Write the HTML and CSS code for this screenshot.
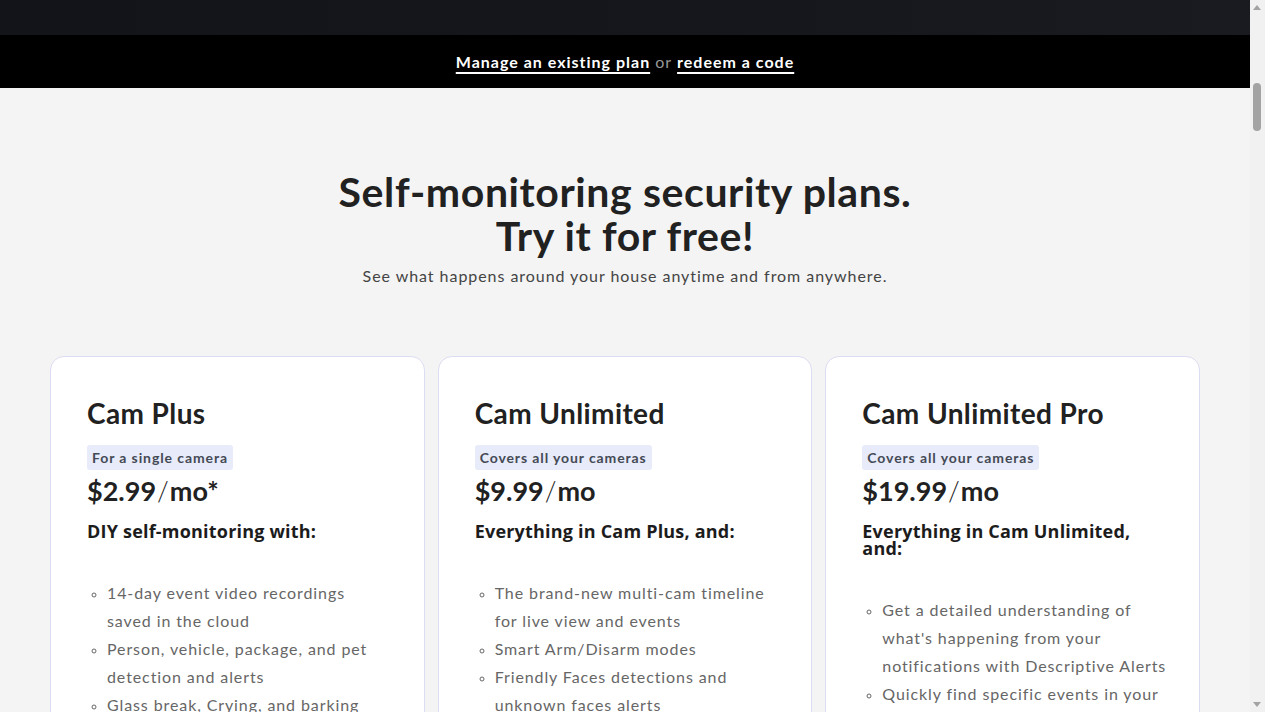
FILE: index.html
```html
<!DOCTYPE html>
<html lang="en">
<head>
    <meta charset="UTF-8">
    <meta name="viewport" content="width=device-width, initial-scale=1.0">
    <title>Self-monitoring security plans</title>
    <link rel="stylesheet" href="styles.css">
</head>
<body>
    <div class="page">
        <div class="hero-edge"></div>

        <div class="plan-links">
            <a href="#">Manage an existing plan</a> <span>or</span> <a href="#">redeem a code</a>
        </div>

        <section class="plans">
            <div class="intro">
                <h1><span>Self-monitoring security plans.</span><span>Try it for free!</span></h1>
                <p>See what happens around your house anytime and from anywhere.</p>
            </div>

            <div class="cards">
                <div class="card">
                    <h2>Cam Plus</h2>
                    <span class="tag">For a single camera</span>
                    <div class="price">$2.99<span class="slash">/</span>mo*</div>
                    <h3>DIY self-monitoring with:</h3>
                    <ul>
                        <li>14-day event video recordings saved in the cloud</li>
                        <li>Person, vehicle, package, and pet detection and alerts</li>
                        <li>Glass break, Crying, and barking sound detection</li>
                        <li>Download and share videos</li>
                    </ul>
                </div>

                <div class="card">
                    <h2>Cam Unlimited</h2>
                    <span class="tag">Covers all your cameras</span>
                    <div class="price">$9.99<span class="slash">/</span>mo</div>
                    <h3>Everything in Cam Plus, and:</h3>
                    <ul>
                        <li>The brand-new multi-cam timeline for live view and events</li>
                        <li>Smart Arm/Disarm modes</li>
                        <li>Friendly Faces detections and unknown faces alerts</li>
                        <li>Unlimited cameras</li>
                    </ul>
                </div>

                <div class="card">
                    <h2>Cam Unlimited Pro</h2>
                    <span class="tag">Covers all your cameras</span>
                    <div class="price">$19.99<span class="slash">/</span>mo</div>
                    <h3>Everything in Cam Unlimited, and:</h3>
                    <ul>
                        <li>Get a detailed understanding of what's happening from your notifications with Descriptive Alerts</li>
                        <li>Quickly find specific events in your video history with Video Search</li>
                        <li>24/7 continuous video recording</li>
                    </ul>
                </div>
            </div>
        </section>
    </div>

    <!-- window scrollbar, page is scrolled partway down -->
    <div class="scrollbar">
        <span class="arrow up"></span>
        <span class="thumb"></span>
        <span class="arrow down"></span>
    </div>
</body>
</html>
```

FILE: styles.css
```css
body {
    font-family: Lato, "Noto Sans", sans-serif;
    background: #f4f4f4;
    color: #222;
    margin: 0;
    overflow: hidden;
}
.page {
    margin-right: 15px;
}
.hero-edge {
    height: 35px;
    background: linear-gradient(90deg, #121419 0%, #15171c 60%, #191b21 100%);
}
.plan-links {
    background: #000;
    height: 53px;
    display: flex;
    align-items: center;
    justify-content: center;
    gap: 5px;
    font-size: 16px;
    letter-spacing: 1px;
}
.plan-links a {
    color: #fff;
    font-weight: 700;
    text-decoration: underline;
    text-underline-offset: 4px;
    text-decoration-thickness: 2px;
}
.plan-links span {
    color: #999;
}
.plans {
    max-width: 1150px;
    margin: 0 auto;
    padding: 82px 0 60px;
}
.intro {
    text-align: center;
}
.intro h1 {
    margin: 0;
    font-size: 41px;
    font-weight: 700;
    letter-spacing: 0.6px;
    color: #212121;
    display: flex;
    flex-direction: column;
    align-items: center;
}
.intro h1 span {
    height: 44px;
    line-height: 44px;
}
.intro p {
    margin: 8px 0 0;
    font-size: 16px;
    letter-spacing: 0.95px;
    color: #444;
}
.cards {
    display: grid;
    grid-template-columns: repeat(3, 1fr);
    gap: 13px;
    margin-top: 71px;
}
.card {
    background: #fff;
    border: 1px solid #dcdcf2;
    border-radius: 14px;
    padding: 36px 31px 30px 36px;
}
.card h2 {
    margin: 0 0 12px;
    font-size: 28px;
    line-height: 40px;
    font-weight: 700;
    letter-spacing: 0.4px;
    color: #212121;
}
.tag {
    display: inline-block;
    background: #e8ebfa;
    color: #444a55;
    font-size: 14px;
    font-weight: 700;
    letter-spacing: 0.9px;
    padding: 4px 5px;
    border-radius: 3px;
}
.price {
    margin-top: 2px;
    font-size: 27px;
    line-height: 38px;
    font-weight: 700;
    color: #212121;
}
.slash {
    font-weight: 300;
    margin: 0 1px;
}
.card h3 {
    margin: 13px 0 0;
    font-family: "Open Sans", "DejaVu Sans", sans-serif;
    font-size: 18px;
    line-height: 17px;
    font-weight: 700;
    letter-spacing: 0.2px;
    padding-right: 35px;
    color: #1c1c1c;
}
.card ul {
    list-style: circle;
    margin: 39px 0 0;
    padding-left: 20px;
    color: #666;
    font-size: 16px;
    line-height: 28px;
    letter-spacing: 0.9px;
}
.card li::marker {
    font-size: 12px;
}
.scrollbar {
    position: fixed;
    top: 0;
    right: 0;
    bottom: 0;
    width: 15px;
    background: #f1f1f1;
}
.thumb {
    position: absolute;
    left: 3px;
    top: 83px;
    width: 8px;
    height: 48px;
    border-radius: 4px;
    background: #a3a3a3;
}
.arrow {
    position: absolute;
    left: 3px;
    width: 0;
    height: 0;
    border-left: 4px solid transparent;
    border-right: 4px solid transparent;
}
.arrow.up {
    top: 5px;
    border-bottom: 5px solid #a3a3a3;
}
.arrow.down {
    bottom: 5px;
    border-top: 5px solid #a3a3a3;
}
```
